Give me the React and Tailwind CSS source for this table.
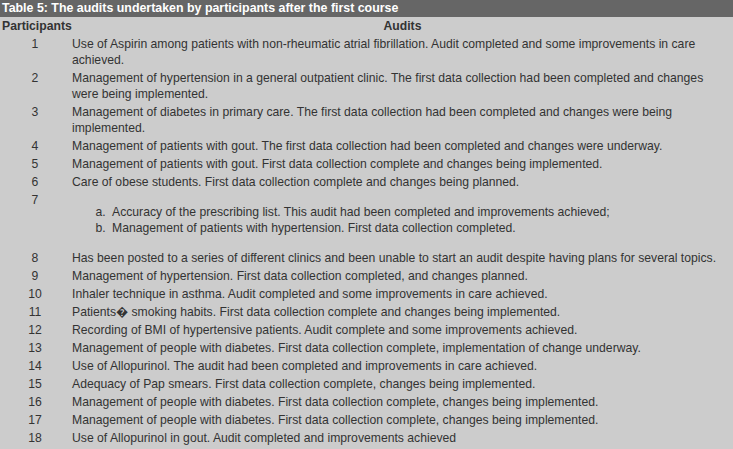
const rows = [
  ["1", "Use of Aspirin among patients with non-rheumatic atrial fibrillation. Audit completed and some improvements in care achieved."],
  ["2", "Management of hypertension in a general outpatient clinic. The first data collection had been completed and changes were being implemented."],
  ["3", "Management of diabetes in primary care. The first data collection had been completed and changes were being implemented."],
  ["4", "Management of patients with gout. The first data collection had been completed and changes were underway."],
  ["5", "Management of patients with gout. First data collection complete and changes being implemented."],
  ["6", "Care of obese students. First data collection complete and changes being planned."],
  ["7", null],
  ["8", "Has been posted to a series of different clinics and been unable to start an audit despite having plans for several topics."],
  ["9", "Management of hypertension. First data collection completed, and changes planned."],
  ["10", "Inhaler technique in asthma. Audit completed and some improvements in care achieved."],
  ["11", "Patients\uFFFD smoking habits. First data collection complete and changes being implemented."],
  ["12", "Recording of BMI of hypertensive patients. Audit complete and some improvements achieved."],
  ["13", "Management of people with diabetes. First data collection complete, implementation of change underway."],
  ["14", "Use of Allopurinol. The audit had been completed and improvements in care achieved."],
  ["15", "Adequacy of Pap smears. First data collection complete, changes being implemented."],
  ["16", "Management of people with diabetes. First data collection complete, changes being implemented."],
  ["17", "Management of people with diabetes. First data collection complete, changes being implemented."],
  ["18", "Use of Allopurinol in gout. Audit completed and improvements achieved"],
];

export default function App() {
  return (
    <div className="w-[733px] h-[449px] overflow-hidden bg-[#cccccc] text-[12.2px] leading-[16px] text-[#333333] font-['Liberation_Sans',Arial,sans-serif]">
      <div className="h-[17px] bg-[#666666] px-[2px] text-white text-[12.4px] font-bold leading-[17px] whitespace-nowrap">
        Table 5: The audits undertaken by participants after the first course
      </div>
      <table className="w-full table-fixed border-collapse">
        <thead>
          <tr>
            <th className="w-[70px] pl-[2px] py-px text-left font-bold whitespace-nowrap">Participants</th>
            <th className="pl-[2px] py-px text-center font-bold">Audits</th>
          </tr>
        </thead>
        <tbody>
          {rows.map(([n, text]) => (
            <tr key={n}>
              <td className="py-px text-center align-top">{n}</td>
              <td className="pl-[2px] py-px align-top">
                {text ?? (
                  <ol className="my-[12px] pl-[37px] list-[lower-alpha]">
                    <li className="pl-[3px]">Accuracy of the prescribing list. This audit had been completed and improvements achieved;</li>
                    <li className="pl-[3px]">Management of patients with hypertension. First data collection completed.</li>
                  </ol>
                )}
              </td>
            </tr>
          ))}
        </tbody>
      </table>
    </div>
  );
}
